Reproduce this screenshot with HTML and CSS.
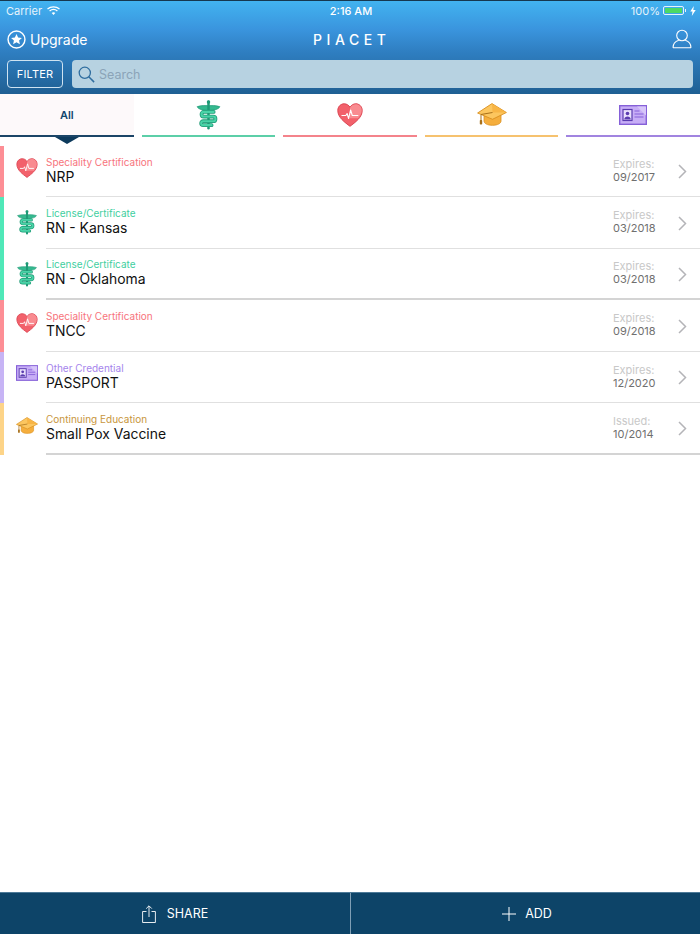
FILE: index.html
```html
<!DOCTYPE html>
<html lang="en">
  <head>
    <meta charset="UTF-8" />
    <title>Piacet</title>
    <link rel="stylesheet" href="styles.css">
  </head>
  <body>
    <svg class="defs" width="0" height="0">
      <symbol id="ic-rod" viewBox="0 0 24 29">
        <path d="M1 6.500C5 5 9 5.500 12 5.500s7-.5 11 1c-1.500 2.500-5 3.500-11 3.500S2.500 9 1 6.500z" fill="#35b98f" stroke="#1f9a76" stroke-width=".7"/>
        <rect x="10.800" y="0.500" width="2.400" height="28" rx="1.200" fill="#1f9a76"/>
        <circle cx="12" cy="2" r="1.700" fill="#1f9a76"/>
        <path d="M17 11.500H7.500C4.500 11.500 4.500 16 7.500 16h9c3 0 3 4.500 0 4.500H7c-2.800 0-2.800 3.800 0 3.800h8" fill="none" stroke="#1f9a76" stroke-width="3.600" stroke-linecap="round"/>
        <path d="M17 11.500H7.500C4.500 11.500 4.500 16 7.500 16h9c3 0 3 4.500 0 4.500H7c-2.800 0-2.800 3.800 0 3.800h8" fill="none" stroke="#49d3a7" stroke-width="2" stroke-linecap="round"/>
      </symbol>
      <symbol id="ic-heart" viewBox="0 0 26 24">
        <path d="M13 23.300C8 19.500 .8 14.500 .8 7.500 .8 3.500 3.800 .8 7.200 .8 9.600 .8 11.800 2.100 13 4.300 14.200 2.100 16.400 .8 18.800 .8 22.200 .8 25.200 3.500 25.200 7.500 25.200 14.500 18 19.500 13 23.300z" fill="#f2616b" stroke="#dc4552" stroke-width="1"/>
        <path d="M13 4.800C14.200 2.700 16.400 1.300 18.800 1.300 22 1.300 24.700 3.700 24.700 7.500 24.700 10.500 23 13 21 15.300H13z" fill="#f98b90"/>
        <path d="M4.500 12.500h4.300l1.300-2 1.500 5 2-8.500 1.700 5.500h6" fill="none" stroke="#fff" stroke-width="1.100" stroke-linejoin="round"/>
      </symbol>
      <symbol id="ic-cap" viewBox="0 0 30 23">
        <path d="M7 12v6c0 2.500 3.500 4.300 8.500 4.300S24 20.500 24 18v-6z" fill="#f5ae3d" stroke="#d98f1f" stroke-width=".8"/>
        <path d="M15 .6 29.400 9.500 15.500 16.300 .6 10z" fill="#fcc65f" stroke="#d98f1f" stroke-width=".9" stroke-linejoin="round"/>
        <path d="M15 .8 29 9.500 15.500 9.500z" fill="#f8b545"/>
        <path d="M15.500 9.500 4 11.500v6.500" fill="none" stroke="#a8701a" stroke-width="1"/>
        <rect x="2.800" y="17" width="2.400" height="4.500" rx=".8" fill="#a8701a"/>
      </symbol>
      <symbol id="ic-card" viewBox="0 0 28 20">
        <rect x=".7" y=".7" width="26.600" height="18.600" fill="#c7aef6" stroke="#8560d8" stroke-width="1.400"/>
        <path d="M18 1.500h9v9z" fill="#d7c6f9"/>
        <rect x="4" y="4.500" width="9" height="11" fill="#e9e0fc" stroke="#5b3cb0" stroke-width="1.200"/>
        <circle cx="8.500" cy="8.500" r="1.800" fill="#5b3cb0"/>
        <path d="M5.200 14.500c0-4 6.600-4 6.600 0z" fill="#5b3cb0"/>
        <path d="M15.500 6h5M15.500 9h9M15.500 12h9" stroke="#8560d8" stroke-width="1.100"/>
      </symbol>
      <symbol id="ic-chevron" viewBox="0 0 9 15">
        <path d="M1 1l6.500 6.500L1 14" fill="none" stroke="#b4b4b8" stroke-width="1.500"/>
      </symbol>
    </svg>

    <header class="top">
      <div class="status">
        <div class="status-left">
          <span>Carrier</span>
          <svg class="wifi" width="13" height="9" viewBox="0 0 13 9">
            <path d="M.5 3C4 .1 9 .1 12.500 3" fill="none" stroke="#fff" stroke-width="1.300"/>
            <path d="M2.600 5c2.300-1.900 5.500-1.900 7.800 0" fill="none" stroke="#fff" stroke-width="1.300"/>
            <path d="M4.700 7c1.100-.9 2.500-.9 3.600 0L6.500 9z" fill="#fff"/>
          </svg>
        </div>
        <div class="status-time">2:16 AM</div>
        <div class="status-right">
          <span>100%</span>
          <span class="battery"><span class="battery-fill"></span></span>
          <span class="battery-tip"></span>
          <svg width="6" height="10" viewBox="0 0 6 10"><path d="M3.800 0 .3 5.600h2.200L1.800 10l3.900-6H3.300z" fill="#fff"/></svg>
        </div>
      </div>

      <div class="nav">
        <div class="upgrade">
          <svg width="19" height="19" viewBox="0 0 20 20">
            <circle cx="10" cy="10" r="8.900" fill="none" stroke="#fff" stroke-width="1.500"/>
            <path d="M10 4.300l1.700 3.700 4 .4-3 2.700.9 4L10 13l-3.600 2.100.9-4-3-2.700 4-.4z" fill="#fff"/>
          </svg>
          <span>Upgrade</span>
        </div>
        <div class="brand">PIACET</div>
        <svg class="user" width="20" height="20" viewBox="0 0 20 20">
          <circle cx="10" cy="6.500" r="5.300" fill="none" stroke="#fff" stroke-width="1.100"/>
          <path d="M1 18.800c0-4.600 3.500-6.900 5.800-7.600M19 18.800c0-4.600-3.500-6.900-5.800-7.600M1 18.800h18" fill="none" stroke="#fff" stroke-width="1.100"/>
        </svg>
      </div>

      <div class="tools">
        <button class="filter">FILTER</button>
        <div class="search">
          <svg width="17" height="17" viewBox="0 0 17 17">
            <circle cx="6.800" cy="6.800" r="5.600" fill="none" stroke="#2f6d9f" stroke-width="1.300"/>
            <path d="M10.800 10.800l5.300 5.300" stroke="#2f6d9f" stroke-width="1.500"/>
          </svg>
          <span>Search</span>
        </div>
      </div>
    </header>

    <nav class="tabs">
      <div class="tab tab-all">All</div>
      <div class="tab tab-green"><svg class="tab-icon" width="25" height="30"><use href="#ic-rod"/></svg></div>
      <div class="tab tab-red"><svg class="tab-icon" width="26" height="24"><use href="#ic-heart"/></svg></div>
      <div class="tab tab-orange"><svg class="tab-icon" width="30" height="23"><use href="#ic-cap"/></svg></div>
      <div class="tab tab-purple"><svg class="tab-icon" width="28" height="20"><use href="#ic-card"/></svg></div>
    </nav>

    <main class="list">
      <div class="row row-red">
        <svg class="row-icon" height="20"><use href="#ic-heart"/></svg>
        <div class="row-body">
          <div class="row-text">
            <div class="kind">Speciality Certification</div>
            <div class="name">NRP</div>
          </div>
          <div class="dates"><div class="date-label">Expires:</div><div class="date">09/2017</div></div>
          <svg class="chevron" width="9" height="15"><use href="#ic-chevron"/></svg>
        </div>
      </div>
      <div class="row row-green">
        <svg class="row-icon" height="25"><use href="#ic-rod"/></svg>
        <div class="row-body">
          <div class="row-text">
            <div class="kind">License/Certificate</div>
            <div class="name">RN - Kansas</div>
          </div>
          <div class="dates"><div class="date-label">Expires:</div><div class="date">03/2018</div></div>
          <svg class="chevron" width="9" height="15"><use href="#ic-chevron"/></svg>
        </div>
      </div>
      <div class="row row-green">
        <svg class="row-icon" height="25"><use href="#ic-rod"/></svg>
        <div class="row-body">
          <div class="row-text">
            <div class="kind">License/Certificate</div>
            <div class="name">RN - Oklahoma</div>
          </div>
          <div class="dates"><div class="date-label">Expires:</div><div class="date">03/2018</div></div>
          <svg class="chevron" width="9" height="15"><use href="#ic-chevron"/></svg>
        </div>
      </div>
      <div class="row row-red">
        <svg class="row-icon" height="20"><use href="#ic-heart"/></svg>
        <div class="row-body">
          <div class="row-text">
            <div class="kind">Speciality Certification</div>
            <div class="name">TNCC</div>
          </div>
          <div class="dates"><div class="date-label">Expires:</div><div class="date">09/2018</div></div>
          <svg class="chevron" width="9" height="15"><use href="#ic-chevron"/></svg>
        </div>
      </div>
      <div class="row row-purple">
        <svg class="row-icon" height="16"><use href="#ic-card"/></svg>
        <div class="row-body">
          <div class="row-text">
            <div class="kind">Other Credential</div>
            <div class="name">PASSPORT</div>
          </div>
          <div class="dates"><div class="date-label">Expires:</div><div class="date">12/2020</div></div>
          <svg class="chevron" width="9" height="15"><use href="#ic-chevron"/></svg>
        </div>
      </div>
      <div class="row row-orange">
        <svg class="row-icon" height="17"><use href="#ic-cap"/></svg>
        <div class="row-body">
          <div class="row-text">
            <div class="kind">Continuing Education</div>
            <div class="name">Small Pox Vaccine</div>
          </div>
          <div class="dates"><div class="date-label">Issued:</div><div class="date">10/2014</div></div>
          <svg class="chevron" width="9" height="15"><use href="#ic-chevron"/></svg>
        </div>
      </div>
    </main>

    <footer class="bottom">
      <div class="action">
        <svg width="14" height="18" viewBox="0 0 14 18">
          <path d="M4.500 6.500H.6v11h12.800v-11H9.500M7 12V1M4.200 3.600 7 .8l2.800 2.800" fill="none" stroke="#fff" stroke-width=".9"/>
        </svg>
        <span>SHARE</span>
      </div>
      <div class="action action-add">
        <svg width="14" height="14" viewBox="0 0 14 14">
          <path d="M7 0v14M0 7h14" stroke="#fff" stroke-width="1"/>
        </svg>
        <span>ADD</span>
      </div>
    </footer>
  </body>
</html>
```

FILE: styles.css
```css
html,
body {
  height: 100%;
}
body {
  margin: 0;
  display: flex;
  flex-direction: column;
  font-family: Inter, "Noto Sans", sans-serif;
  background-color: #fff;
  overflow: hidden;
}
.defs {
  position: absolute;
}

/* blue header */
.top {
  flex: none;
  height: 94px;
  box-sizing: border-box;
  border-top: 1px solid #16384f;
  background: linear-gradient(#42b3f0 0, #3a95de 28px, #2f7fc2 50px, #1f5f92 94px);
  color: #fff;
}
.status {
  display: grid;
  grid-template-columns: 1fr auto 1fr;
  align-items: center;
  height: 19px;
  padding: 0 4px 0 6px;
  font-size: 11px;
  color: #e6f3fb;
}
.status-left,
.status-right {
  display: flex;
  align-items: center;
  gap: 5px;
}
.status-right {
  justify-content: flex-end;
  gap: 2px;
}
.status-time {
  font-weight: 500;
  color: #fff;
}
.battery {
  display: block;
  width: 17px;
  height: 5px;
  margin-left: 1px;
  padding: 1px;
  border: 1px solid #e6f3fb;
  border-radius: 2px;
}
.battery-fill {
  display: block;
  height: 100%;
  background-color: #4cd964;
}
.battery-tip {
  width: 1px;
  height: 3px;
  margin: 0 2px 0 -1px;
  background-color: #e6f3fb;
}
.nav {
  display: grid;
  grid-template-columns: 1fr auto 1fr;
  align-items: center;
  height: 38px;
  padding: 0 8px 0 7px;
}
.upgrade {
  display: flex;
  align-items: center;
  gap: 4px;
  font-size: 14px;
}
.brand {
  padding-left: 4.600px;
  font-size: 14px;
  font-weight: 500;
  letter-spacing: 4.600px;
}
.user {
  display: block;
  justify-self: end;
}
.tools {
  display: flex;
  gap: 9px;
  padding: 2px 7px 0;
}
.filter {
  width: 56px;
  height: 28px;
  padding: 0;
  border: 1px solid #cfe3f1;
  border-radius: 4px;
  background-color: transparent;
  color: #fff;
  font-family: inherit;
  font-size: 11px;
  letter-spacing: .2px;
}
.search {
  flex: 1;
  display: flex;
  align-items: center;
  gap: 4px;
  height: 28px;
  padding-left: 6px;
  border-radius: 4px;
  background-color: #b7d2e1;
  color: #8ba4b8;
  font-size: 12.500px;
}

/* category tabs */
.tabs {
  flex: none;
  display: flex;
  gap: 8px;
  height: 51.500px;
}
.tab {
  flex: 1;
  height: 43px;
  display: flex;
  justify-content: center;
  align-items: center;
  position: relative;
  box-sizing: border-box;
  border-bottom: 2px solid;
}
.tab-icon {
  display: block;
}
.tab-all {
  background-color: #fdf9fa;
  color: #11466d;
  font-size: 11px;
  font-weight: 600;
  border-color: #1b4567;
}
.tab-all::after {
  content: "";
  position: absolute;
  left: 50%;
  bottom: -9px;
  margin-left: -12px;
  border-style: solid;
  border-width: 7px 12px 0;
  border-color: #0d3a5c transparent transparent;
}
.tab-green {
  border-color: #5ccfa8;
}
.tab-red {
  border-color: #f4838b;
}
.tab-orange {
  border-color: #f6c26f;
}
.tab-purple {
  border-color: #a184e0;
}

/* credentials */
.list {
  flex: 1;
}
.row {
  display: flex;
  height: 51.500px;
  border-left: 4px solid;
}
.row-icon {
  flex: none;
  align-self: center;
  width: 22px;
  margin: 0 8px 0 12px;
}
.row-red .row-icon {
  margin-top: -6px;
}
.row-purple .row-icon {
  margin-top: -8px;
}
.row-orange .row-icon {
  margin-top: -7px;
}
.row-body {
  flex: 1;
  display: flex;
  align-items: center;
  padding-right: 13px;
  border-bottom: 1px solid #e0e0e0;
}
.row:nth-child(3) .row-body,
.row:last-child .row-body {
  border-bottom: 2px solid #d4d4d4;
}
.row-text {
  flex: 1;
  margin-top: -2px;
}
.kind {
  font-size: 10px;
  line-height: 14px;
}
.name {
  font-size: 13.900px;
  line-height: 16px;
  color: #111;
}
.dates {
  width: 65px;
  font-size: 11px;
  line-height: 13px;
  color: #6f6f6f;
}
.date-label {
  color: #c8c8c8;
}
.chevron {
  flex: none;
  display: block;
  margin-top: 2px;
}
.row-red {
  border-color: #fd8e95;
}
.row-red .kind {
  color: #f7747c;
}
.row-green {
  border-color: #50e8b8;
}
.row-green .kind {
  color: #3fcfa0;
}
.row-purple {
  border-color: #c7b4f5;
}
.row-purple .kind {
  color: #a584ec;
}
.row-orange {
  border-color: #fdd488;
}
.row-orange .kind {
  color: #c8963c;
}

/* bottom bar */
.bottom {
  flex: none;
  display: flex;
  height: 42px;
  box-sizing: border-box;
  border-top: 1px solid #4d7a98;
  background-color: #0d4468;
}
.action {
  flex: 0 0 350px;
  display: flex;
  justify-content: center;
  align-items: center;
  gap: 11px;
  box-sizing: border-box;
  color: #fff;
  font-size: 12.500px;
}
.action-add {
  gap: 9px;
  padding-left: 3px;
  border-left: 1px solid #7f9fb5;
}
```
